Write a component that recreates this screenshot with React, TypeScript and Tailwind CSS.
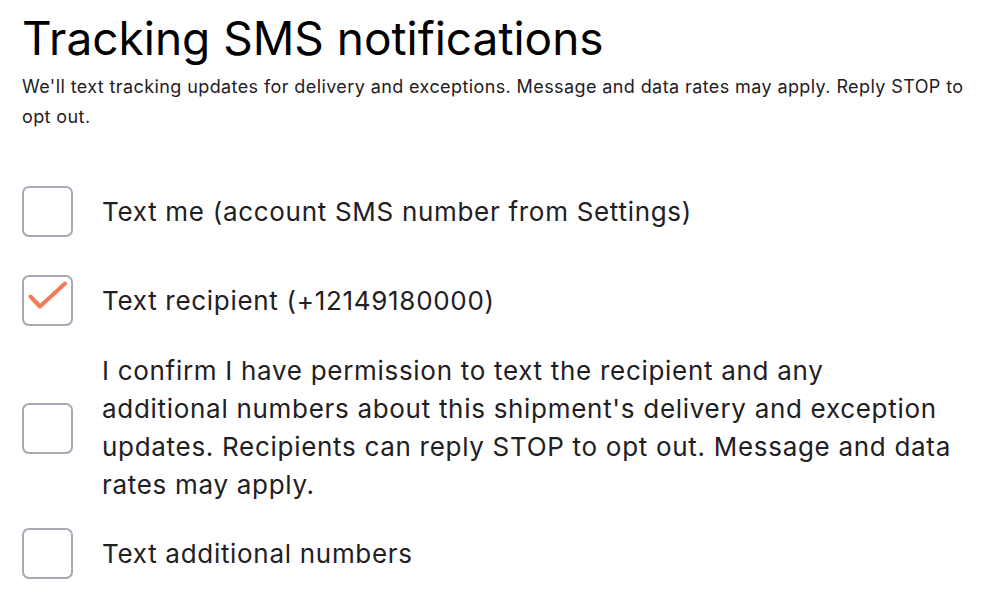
import { useState } from 'react';

const options = [
  { id: 'me', lines: ['Text me (account SMS number from Settings)'], checked: false, gap: 'mt-[54px]' },
  { id: 'recipient', lines: ['Text recipient (+12149180000)'], checked: true, gap: 'mt-[38px]' },
  {
    id: 'confirm',
    lines: [
      'I confirm I have permission to text the recipient and any',
      "additional numbers about this shipment's delivery and exception",
      'updates. Recipients can reply STOP to opt out. Message and data',
      'rates may apply.',
    ],
    checked: false,
    gap: 'mt-[26px]',
  },
  { id: 'additional', lines: ['Text additional numbers'], checked: false, gap: 'mt-[24px]' },
];

function Checkbox({ checked, onChange }: { checked: boolean; onChange: () => void }) {
  return (
    <button
      type="button"
      onClick={onChange}
      className="w-[51px] h-[51px] shrink-0 rounded-[7px] border-2 border-[#a9a8b6] bg-white"
    >
      {checked && (
        <svg width="47" height="47" viewBox="0 0 47 47" fill="none">
          <path d="M6.5 19.5 L16 29.5 L41 6.5" stroke="#f07b56" strokeWidth="4" strokeLinecap="round" strokeLinejoin="round" />
        </svg>
      )}
    </button>
  );
}

export default function App() {
  const [state, setState] = useState(options.map((o) => o.checked));

  return (
    <div
      className="w-[1004px] h-[604px] bg-white overflow-hidden pl-[22px] pr-[22px] pt-[8px]"
      style={{ fontFamily: 'Inter, "Noto Sans", sans-serif' }}
    >
      <h1 className="text-[46px] leading-[60px] font-normal text-black">Tracking SMS notifications</h1>
      <p className="mt-[4px] text-[18px] leading-[30px] tracking-[0.4px] text-[#1f2023]">
        We'll text tracking updates for delivery and exceptions. Message and data rates may apply. Reply STOP to opt out.
      </p>

      <div className="flex flex-col">
        {options.map((o, i) => (
          <label key={o.id} className={`${o.gap} flex items-center gap-[29px] cursor-pointer`}>
            <Checkbox
              checked={state[i]}
              onChange={() => setState((s) => s.map((v, j) => (j === i ? !v : v)))}
            />
            <span className="text-[26px] leading-[38px] tracking-[0.7px] text-[#1f2023]">
              {o.lines.map((l) => (
                <span key={l} className="block whitespace-nowrap">{l}</span>
              ))}
            </span>
          </label>
        ))}
      </div>
    </div>
  );
}
